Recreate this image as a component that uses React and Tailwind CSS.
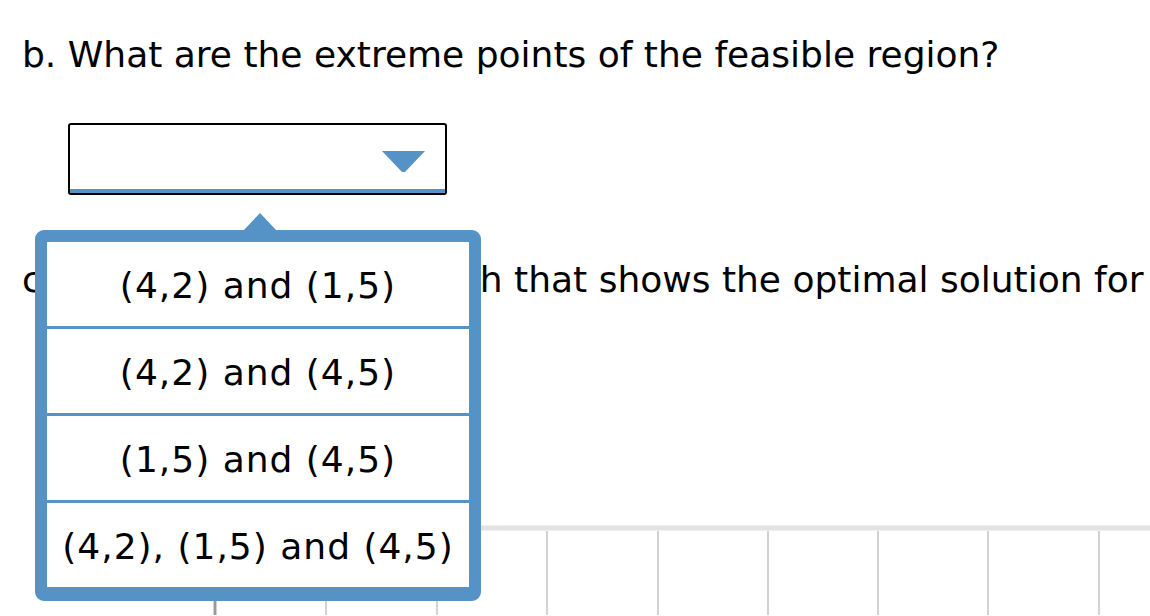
import React from "react";

const BLUE = "#5592c6";

function Caret() {
  return (
    <svg width="34" height="19" viewBox="0 0 34 19" className="absolute left-[243px] top-[212px]">
      <polygon points="0,19 17,1 34,19" fill={BLUE} />
    </svg>
  );
}

function Arrow() {
  return (
    <svg width="43" height="22" viewBox="0 0 43 22">
      <polygon points="0,0 43,0 23,21 20,21" fill={BLUE} />
    </svg>
  );
}

function Grid() {
  const xs = [215, 326, 437, 547, 658, 768, 878, 988, 1099];
  return (
    <svg width="1150" height="91" viewBox="0 0 1150 91" className="block">
      <line x1="215" y1="4" x2="1150" y2="4" stroke="#e2e2e2" strokeWidth="5" />
      {xs.map((x, i) => (
        <line
          key={x}
          x1={x}
          y1={7}
          x2={x}
          y2={91}
          stroke={i === 0 ? "#9a9a9a" : "#d2d2d2"}
          strokeWidth={i === 0 ? 3 : 2}
        />
      ))}
    </svg>
  );
}

const options = [
  "(4,2) and (1,5)",
  "(4,2) and (4,5)",
  "(1,5) and (4,5)",
  "(4,2), (1,5) and (4,5)",
];

export default function App() {
  return (
    <div
      className="relative w-[1150px] h-[616px] overflow-hidden bg-white text-black"
      style={{ fontFamily: "'DejaVu Sans', Verdana, sans-serif" }}
    >
      <p className="pl-[22px] pt-[34px] text-[36px] leading-[42px] whitespace-nowrap">
        b. What are the extreme points of the feasible region?
      </p>

      <div className="ml-[68px] mt-[47px] w-[379px] h-[72px] border-2 border-black rounded-[3px] flex flex-col overflow-hidden">
        <div className="flex-1 flex justify-end items-start pt-[26px] pr-[20px]">
          <Arrow />
        </div>
        <div className="h-[4px] bg-[#5592c6]" />
      </div>

      <p className="pl-[22px] mt-[64px] text-[36px] leading-[42px] whitespace-nowrap">
        c. Construct a linear graph that shows the optimal solution for this problem.
      </p>

      <div className="mt-[223px]">
        <Grid />
      </div>

      <Caret />
      <div className="absolute left-[35px] top-[230px] w-[446px] h-[371px] bg-white border-[12px] border-b-[14px] border-[#5592c6] rounded-[9px] flex flex-col">
        {options.map((o, i) => (
          <div
            key={o}
            className={
              "shrink-0 flex items-center justify-center pt-[3px] text-[36px] leading-[42px] tracking-[1px] whitespace-nowrap " +
              (i < options.length - 1 ? "h-[87px] border-b-[3px] border-[#5592c6]" : "h-[84px]")
            }
          >
            {o}
          </div>
        ))}
      </div>
    </div>
  );
}
